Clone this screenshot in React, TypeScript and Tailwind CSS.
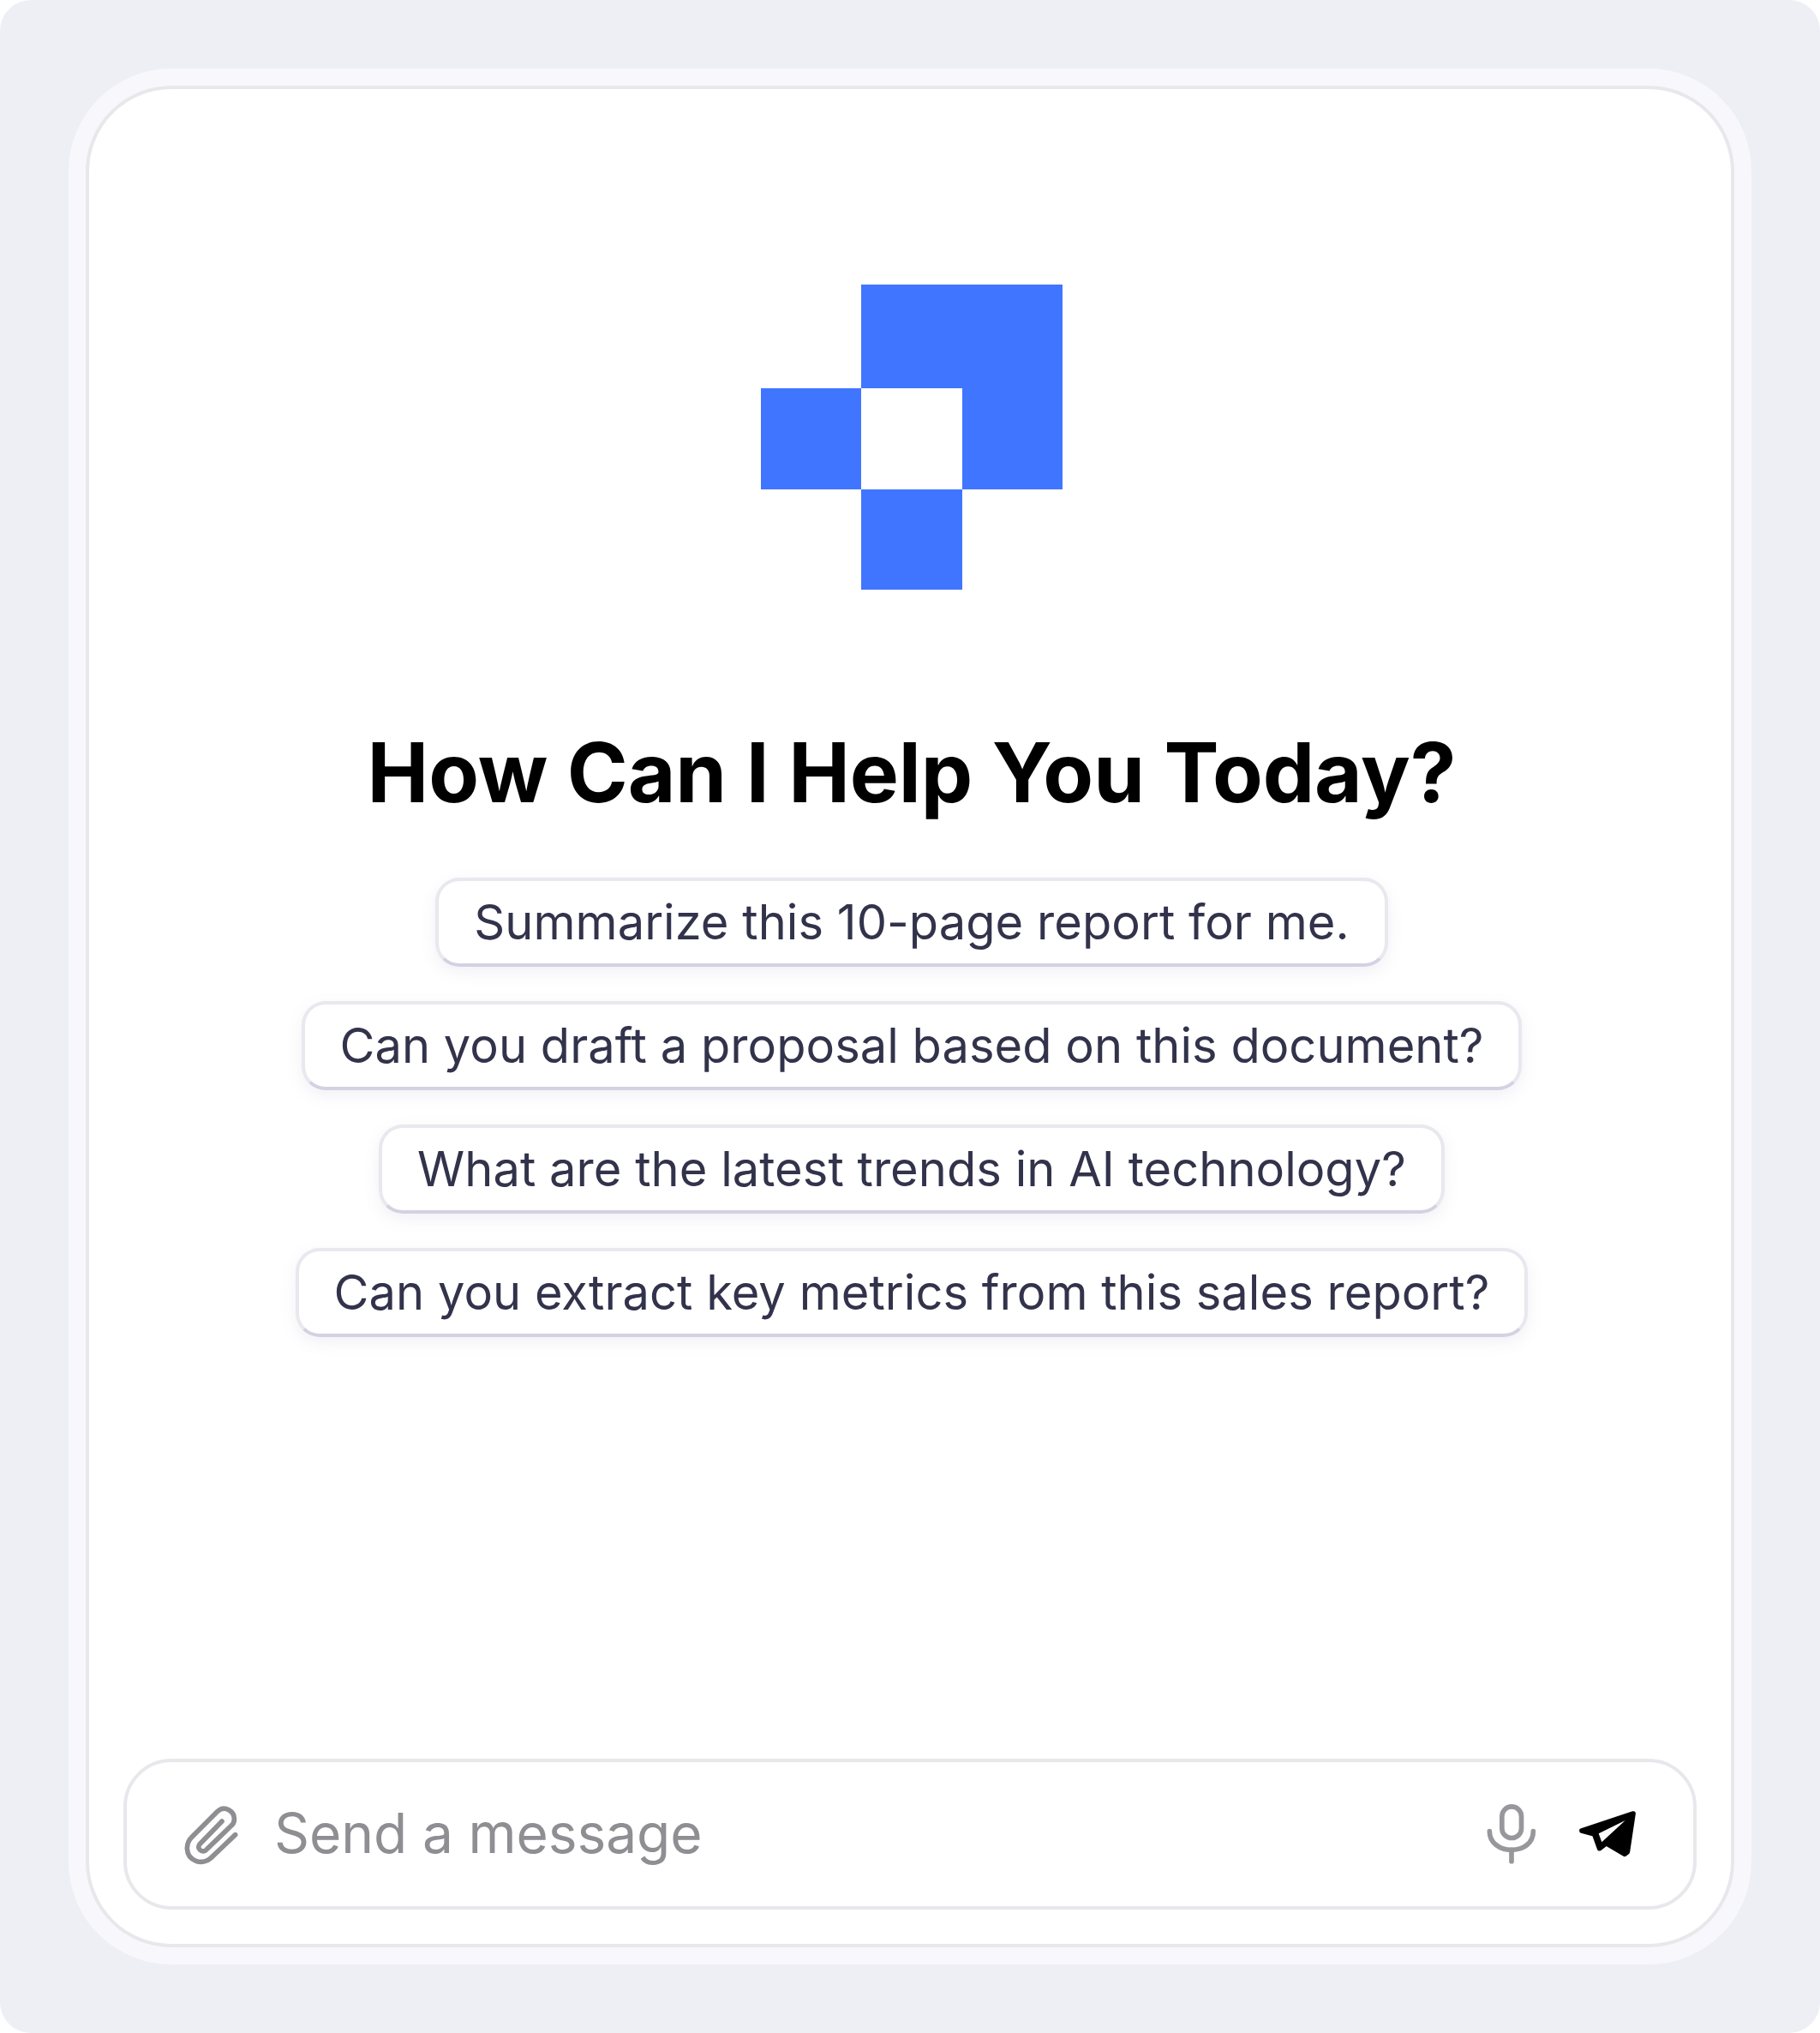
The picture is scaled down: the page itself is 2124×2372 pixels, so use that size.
const prompts = [
  "Summarize this 10-page report for me.",
  "Can you draft a proposal based on this document?",
  "What are the latest trends in AI technology?",
  "Can you extract key metrics from this sales report?",
];

const Logo = () => (
  <svg width="352" height="356" viewBox="0 0 352 356" className="block">
    <path d="M117 0H352V239H235V121H117Z" fill="#4076ff" />
    <rect x="0" y="121" width="117" height="118" fill="#4076ff" />
    <rect x="117" y="239" width="118" height="117" fill="#4076ff" />
  </svg>
);

const PaperclipIcon = () => (
  <svg width="74" height="80" viewBox="240 210 222 240" fill="none" stroke="#8e8e93" strokeWidth="17" strokeLinecap="round" strokeLinejoin="round">
    <path d="M437 332L352 413C322 441 270 425 268 380C268 365 275 350 285 340L375 250C400 228 435 250 433 280C433 290 428 297 420 303L335 385C320 398 300 380 312 365L390 285" />
  </svg>
);

const MicIcon = () => (
  <svg width="60" height="80" viewBox="132 210 180 240" fill="none" stroke="#98989c" strokeWidth="17" strokeLinecap="round">
    <rect x="188.5" y="233.5" width="68" height="110" rx="34" />
    <path d="M145 320C145 360 180 385 222 385C265 385 298 360 298 320" />
    <path d="M222 385V425" />
  </svg>
);

const SendIcon = () => (
  <svg width="76" height="72" viewBox="450 240 228 216" className="ml-[46px] mt-[12px]">
    <path
      d="M648 258L468 318L512 330L530 380L553 362L618 400L628 392Z"
      fill="#000"
      stroke="#000"
      strokeWidth="17"
      strokeLinejoin="round"
    />
    <path d="M527 328L620 282L538 358Z" fill="#fff" />
  </svg>
);

export default function App() {
  return (
    <div className="w-[2124px] h-[2372px] bg-white font-['Inter',sans-serif]">
      <div className="w-full h-full rounded-[36px] bg-[#eeeff4] p-[80px]">
        <div className="h-full rounded-[120px] bg-[#f8f8fc] p-[20px]">
          <div className="h-full rounded-[100px] border-4 border-[#e8e8ec] bg-white px-[40px] pb-[40px] pt-[228px] flex flex-col">
            <div className="pl-[4px] flex flex-col items-center">
              <Logo />
              <h1 className="mt-[155px] text-[96px] leading-[116px] font-bold text-black tracking-[-0.1px]">
                How Can I Help You Today?
              </h1>
              <div className="mt-[65px] flex flex-col items-center gap-[40px]">
                {prompts.map((prompt) => (
                  <button
                    key={prompt}
                    className="h-[104px] px-[41px] rounded-[28px] border-4 border-[#e8e8ee] border-b-[#d2d2e2] bg-white text-[56px] tracking-[0.04px] text-[#32334b] shadow-[0_6px_18px_rgba(120,120,170,0.1)] whitespace-nowrap"
                  >
                    {prompt}
                  </button>
                ))}
              </div>
            </div>
            <div className="mt-auto w-full h-[176px] rounded-[56px] border-4 border-[#e8e8ec] flex items-center pl-[61px] pr-[60px]">
              <PaperclipIcon />
              <span className="ml-[37px] flex-1 text-[64px] leading-[76px] pb-[2px] tracking-[-0.1px] text-[#8e8e93]">Send a message</span>
              <MicIcon />
              <SendIcon />
            </div>
          </div>
        </div>
      </div>
    </div>
  );
}
